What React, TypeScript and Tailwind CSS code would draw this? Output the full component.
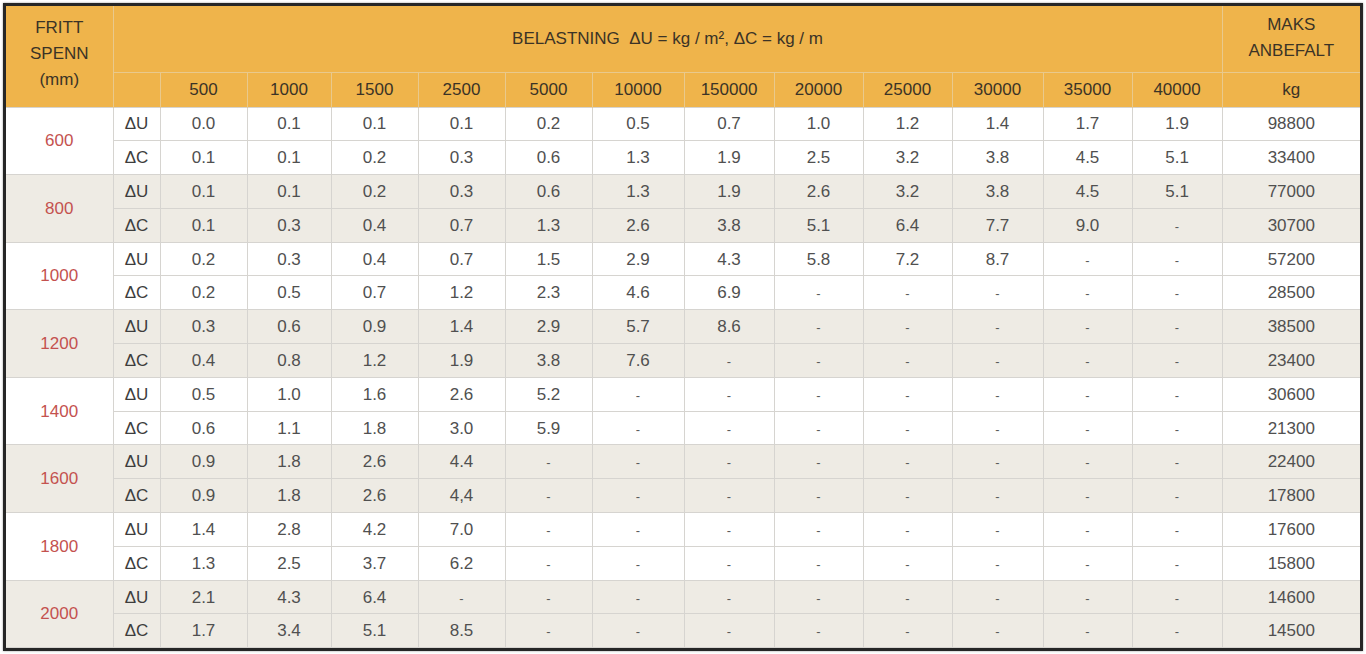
const loads = ["500", "1000", "1500", "2500", "5000", "10000", "150000", "20000", "25000", "30000", "35000", "40000"];

const widths = [107, 47, 87, 84, 87, 87, 87, 92, 90, 89, 89, 91, 89, 90, 138];

type Group = { span: string; u: string[]; c: string[]; maxU: string; maxC: string };

const fill = (vals: string[]) => [...vals, ...Array(12 - vals.length).fill("-")];

const groups: Group[] = [
  {
    span: "600",
    u: fill(["0.0", "0.1", "0.1", "0.1", "0.2", "0.5", "0.7", "1.0", "1.2", "1.4", "1.7", "1.9"]),
    c: fill(["0.1", "0.1", "0.2", "0.3", "0.6", "1.3", "1.9", "2.5", "3.2", "3.8", "4.5", "5.1"]),
    maxU: "98800",
    maxC: "33400",
  },
  {
    span: "800",
    u: fill(["0.1", "0.1", "0.2", "0.3", "0.6", "1.3", "1.9", "2.6", "3.2", "3.8", "4.5", "5.1"]),
    c: fill(["0.1", "0.3", "0.4", "0.7", "1.3", "2.6", "3.8", "5.1", "6.4", "7.7", "9.0"]),
    maxU: "77000",
    maxC: "30700",
  },
  {
    span: "1000",
    u: fill(["0.2", "0.3", "0.4", "0.7", "1.5", "2.9", "4.3", "5.8", "7.2", "8.7"]),
    c: fill(["0.2", "0.5", "0.7", "1.2", "2.3", "4.6", "6.9"]),
    maxU: "57200",
    maxC: "28500",
  },
  {
    span: "1200",
    u: fill(["0.3", "0.6", "0.9", "1.4", "2.9", "5.7", "8.6"]),
    c: fill(["0.4", "0.8", "1.2", "1.9", "3.8", "7.6"]),
    maxU: "38500",
    maxC: "23400",
  },
  {
    span: "1400",
    u: fill(["0.5", "1.0", "1.6", "2.6", "5.2"]),
    c: fill(["0.6", "1.1", "1.8", "3.0", "5.9"]),
    maxU: "30600",
    maxC: "21300",
  },
  {
    span: "1600",
    u: fill(["0.9", "1.8", "2.6", "4.4"]),
    c: fill(["0.9", "1.8", "2.6", "4,4"]),
    maxU: "22400",
    maxC: "17800",
  },
  {
    span: "1800",
    u: fill(["1.4", "2.8", "4.2", "7.0"]),
    c: fill(["1.3", "2.5", "3.7", "6.2"]),
    maxU: "17600",
    maxC: "15800",
  },
  {
    span: "2000",
    u: fill(["2.1", "4.3", "6.4"]),
    c: fill(["1.7", "3.4", "5.1", "8.5"]),
    maxU: "14600",
    maxC: "14500",
  },
];

function Cell({ v }: { v: string }) {
  return (
    <td className="border border-[#d6d4d0] text-center align-middle">
      {v === "-" ? <span className="text-[13px] text-[#5a5a5a]">-</span> : v}
    </td>
  );
}

export default function App() {
  return (
    <div className="w-[1366px] h-[654px] bg-white pt-[3px] pl-[3px]" style={{ fontFamily: '"Liberation Sans", Arial, sans-serif' }}>
      <div className="w-[1360px] border-[3px] border-[#262626] shadow-[0_0_2px_rgba(0,0,0,0.4)]">
        <table className="w-[1354px] table-fixed border-collapse text-[17px] leading-none text-[#505050]">
          <colgroup>
            {widths.map((w, i) => (
              <col key={i} style={{ width: w }} />
            ))}
          </colgroup>
          <thead className="bg-[#efb44b] text-[#3b3326]">
            <tr className="h-[66px]">
              <th rowSpan={2} className="border-r border-[#e9c98c] font-normal text-[17px] leading-[26px] align-top pt-[9px]">
                FRITT
                <br />
                SPENN
                <br />
                (mm)
              </th>
              <th colSpan={13} className="border-r border-b border-[#e9c98c] font-normal text-[17px]">
                BELASTNING&nbsp; ΔU = kg / m², ΔC = kg / m
              </th>
              <th className="font-normal text-[17px] leading-[26px] border-b border-[#e9c98c] pb-[2px]">
                MAKS
                <br />
                ANBEFALT
              </th>
            </tr>
            <tr className="h-[35px]">
              <th className="border-r border-[#e9c98c]" />
              {loads.map((l) => (
                <th key={l} className="border-r border-[#e9c98c] font-normal">
                  {l}
                </th>
              ))}
              <th className="font-normal">kg</th>
            </tr>
          </thead>
          <tbody>
            {groups.map((g, gi) => {
              const bg = gi % 2 === 0 ? "bg-white" : "bg-[#eeebe4]";
              return [
                <tr key={g.span + "u"} className={`h-[33.8px] ${bg}`}>
                  <td rowSpan={2} className="border border-[#d6d4d0] border-l-0 text-center text-[#c4524f]">
                    {g.span}
                  </td>
                  <td className="border border-[#d6d4d0] text-center text-[#3d3d3d]">ΔU</td>
                  {g.u.map((v, i) => (
                    <Cell key={i} v={v} />
                  ))}
                  <td className="border border-[#d6d4d0] border-r-0 text-center">{g.maxU}</td>
                </tr>,
                <tr key={g.span + "c"} className={`h-[33.8px] ${bg}`}>
                  <td className="border border-[#d6d4d0] text-center text-[#3d3d3d]">ΔC</td>
                  {g.c.map((v, i) => (
                    <Cell key={i} v={v} />
                  ))}
                  <td className="border border-[#d6d4d0] border-r-0 text-center">{g.maxC}</td>
                </tr>,
              ];
            })}
          </tbody>
        </table>
      </div>
    </div>
  );
}
